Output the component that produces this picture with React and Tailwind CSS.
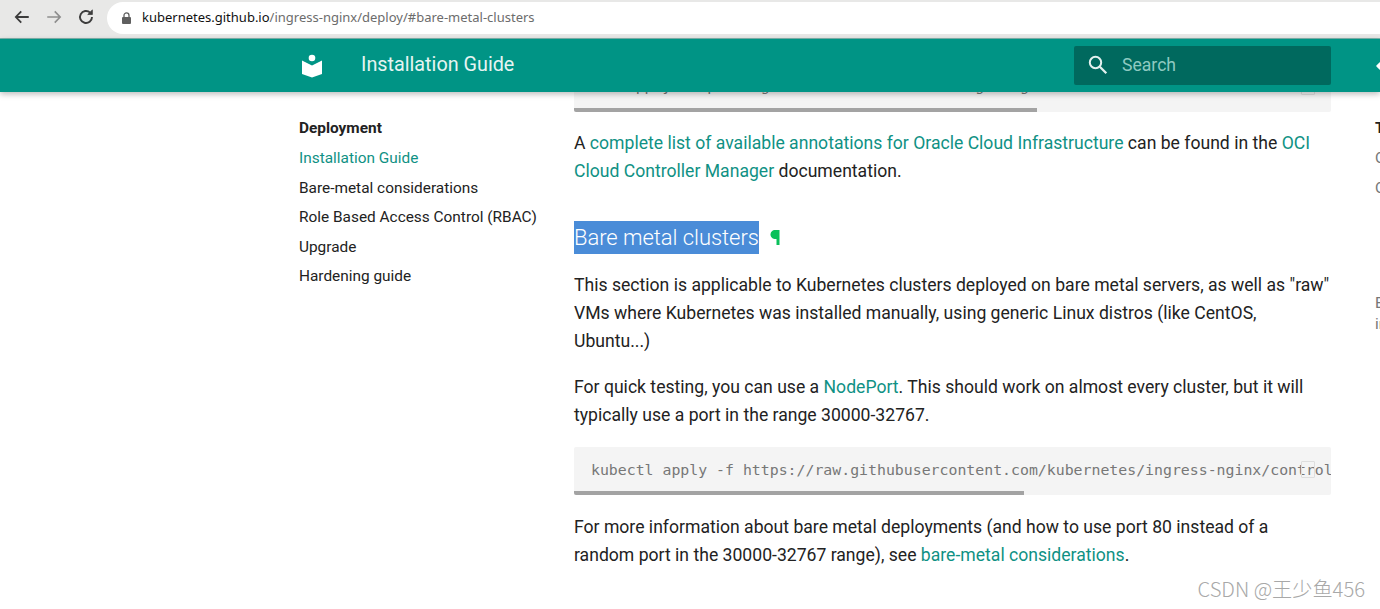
import React from "react";

const Link = ({ children }) => <a className="text-[#0f9184]">{children}</a>;

function Chrome() {
  return (
    <div className="h-[39px] bg-[#e8e8e7] flex items-start border-b border-[#7fb5ae] relative">
      <div className="flex items-center w-[107px] h-[34px] pl-[13px] gap-[14px]">
        <svg width="18" height="18" viewBox="0 0 24 24" fill="none" stroke="#3c3c3c" strokeWidth="2.4"><path d="M21 12H4M11 4.5 3.8 12l7.2 7.5" /></svg>
        <svg width="18" height="18" viewBox="0 0 24 24" fill="none" stroke="#8e8e8e" strokeWidth="2.2"><path d="M3 12h17M13 4.5l7.2 7.5-7.2 7.5" /></svg>
        <svg width="18" height="18" viewBox="0 0 24 24" fill="none" stroke="#3c3c3c" strokeWidth="2.6"><path d="M20 12a8 8 0 1 1-2.5-5.8" /><path d="M20.5 2.5v6.2h-6.2z" fill="#3c3c3c" strokeWidth="1" /></svg>
      </div>
      <div className="flex-1 h-[32px] mt-[2px] bg-white rounded-l-[16px] flex items-center pl-[14px]">
        <svg width="11" height="13" viewBox="0 0 11 13" className="mr-[10px]"><rect x="1" y="5" width="9" height="7" rx="1" fill="#5f5f5f" /><path d="M3 5V3.4a2.5 2.5 0 0 1 5 0V5" fill="none" stroke="#5f5f5f" strokeWidth="1.3" /></svg>
        <span className="text-[13px] font-['Noto_Sans',sans-serif] text-[#6c6c6c] whitespace-nowrap"><span className="text-[#111]">kubernetes.github.io</span>/ingress-nginx/deploy/#bare-metal-clusters</span>
      </div>
    </div>
  );
}

function Header() {
  return (
    <header className="relative z-10 h-[53px] bg-[#009485] shadow-[0_2px_6px_rgba(0,0,0,0.28)] flex items-center pl-[301px] overflow-hidden">
      <svg width="22" height="24" viewBox="0 0 22 24" className="shrink-0" fill="white">
        <circle cx="11" cy="4" r="3.300" />
        <path d="M1 6.500 11 11.500 21 6.500V20L11 23.500 1 20z" />
      </svg>
      <div className="shrink-0 ml-[38px] mb-[2px] text-[19.800px] text-[#e6f4f2] w-[713px]">Installation Guide</div>
      <div className="shrink-0 w-[257px] h-[39px] mb-[1px] bg-[#00695e] rounded-[2px] flex items-center pl-[12px]">
        <svg width="24" height="24" viewBox="0 0 24 24" fill="none" stroke="#e3f1ef" strokeWidth="2"><circle cx="9.500" cy="9.500" r="5.700" /><path d="m13.800 13.800 6.500 6.500" strokeWidth="2.300" /></svg>
        <span className="ml-[12px] text-[17.600px] text-[#8fc9c1]">Search</span>
      </div>
      <div className="ml-[47px] w-[10px] h-[10px] bg-white rotate-45 rounded-[1px] shrink-0" />
    </header>
  );
}

function Sidebar() {
  const items = ["Bare-metal considerations", "Role Based Access Control (RBAC)", "Upgrade", "Hardening guide"];
  return (
    <aside className="w-[275px] shrink-0 pt-[26px] text-[15.400px] leading-[21px] text-[#222]">
      <div className="font-bold">Deployment</div>
      <div className="mt-[9px] text-[#0f9184]">Installation Guide</div>
      {items.map((t) => (
        <div key={t} className="mt-[8.500px] whitespace-nowrap">{t}</div>
      ))}
    </aside>
  );
}

function Code({ children, bar, pad, className = "" }) {
  return (
    <div className={`relative h-[48px] bg-[#f4f4f4] rounded-[2px] overflow-hidden ${className}`}>
      <div className={`px-[17px] ${pad} font-['DejaVu_Sans_Mono',monospace] text-[14.850px] leading-[20px] text-[#777] whitespace-pre`}>{children}</div>
      <div className="absolute left-0 bottom-0 h-[4px] bg-[#a3a3a3]" style={{ width: bar }} />
      <div className="absolute left-[727px] top-[14px] w-[14px] h-[17px] border border-[#dedede] rounded-[1px]" />
    </div>
  );
}

function Content() {
  return (
    <main className="w-[757px] shrink-0 -mt-[28px] text-[17.600px] leading-[28px] text-[#222]">
      <Code bar={463} pad="pt-[12px]">{"    apply to pod tag annotations on this tag flag"}</Code>
      <p className="mt-[17px]">A <Link>complete list of available annotations for Oracle Cloud Infrastructure</Link> can be found in the <Link>OCI Cloud Controller Manager</Link> documentation.</p>
      <h2 className="mt-[36px] h-[33px] flex items-center text-[22px] leading-[33px] font-light tracking-[-0.05px]">
        <span className="bg-[#4a8cd8] text-white">Bare metal clusters</span>
        <svg width="10" height="15" viewBox="0 0 10 15" className="ml-[11px]" fill="#0ac05a"><path d="M5.500 0H9.500V15H6.500V9H4.500A4.500 4.500 0 0 1 5.500 0z" /></svg>
      </h2>
      <p className="mt-[17px]">This section is applicable to Kubernetes clusters deployed on bare metal servers, as well as "raw" VMs where Kubernetes was installed manually, using generic Linux distros (like CentOS, Ubuntu...)</p>
      <p className="mt-[18px]">For quick testing, you can use a <Link>NodePort</Link>. This should work on almost every cluster, but it will typically use a port in the range 30000-32767.</p>
      <Code bar={450} pad="pt-[13px]" className="mt-[18px]">kubectl apply -f https://raw.githubusercontent.com/kubernetes/ingress-nginx/controller</Code>
      <p className="mt-[18px]">For more information about bare metal deployments (and how to use port 80 instead of a random port in the 30000-32767 range), see <Link>bare-metal considerations</Link>.</p>
    </main>
  );
}

function Toc() {
  return (
    <aside className="ml-[44px] pt-[26px] text-[15.400px] leading-[21px] text-[#777] whitespace-nowrap">
      <div className="font-bold text-[#222]">Table</div>
      <div className="mt-[9px]">Overview</div>
      <div className="mt-[8.500px]">Other</div>
      <div className="mt-[94px] leading-[21px]">Edit</div>
      <div>in</div>
    </aside>
  );
}

export default function App() {
  return (
    <div className="relative w-[1380px] h-[609px] overflow-hidden bg-white font-['Roboto',sans-serif]">
      <Chrome />
      <Header />
      <div className="flex pl-[299px]">
        <Sidebar />
        <Content />
        <Toc />
      </div>
      <div className="absolute right-[15px] bottom-[8px] text-[20.200px] leading-[24px] font-light text-[#a8a8a8] font-['Noto_Sans_CJK_SC','Noto_Sans',sans-serif]">CSDN @王少鱼456</div>
    </div>
  );
}
